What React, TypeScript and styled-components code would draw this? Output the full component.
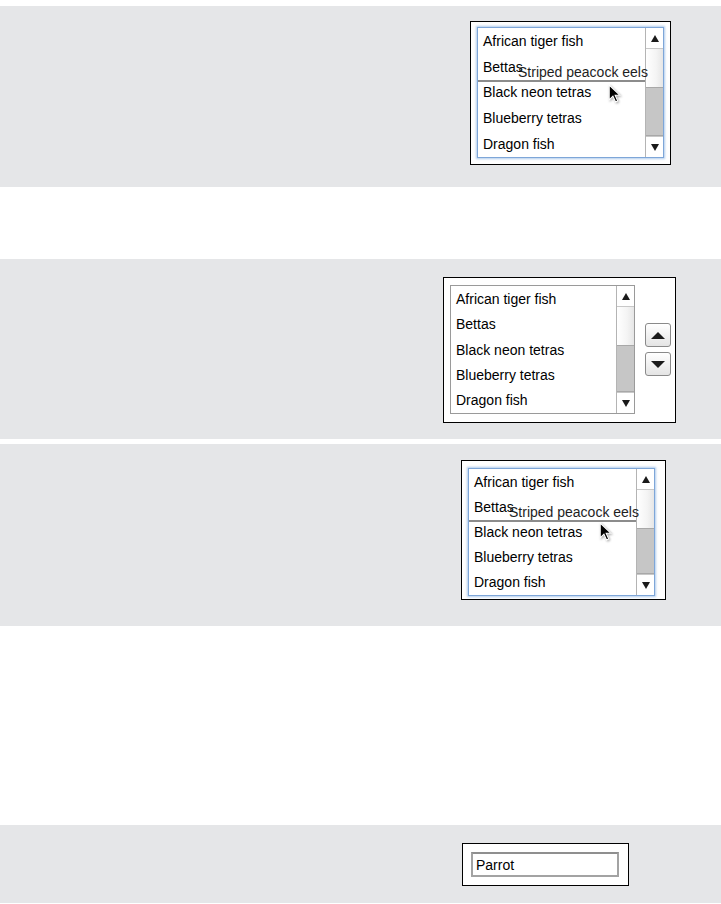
import React from 'react';
import styled, { createGlobalStyle } from 'styled-components';

const GlobalStyle = createGlobalStyle`
  body {
    margin: 0;
    background: #fff;
    font-family: "Liberation Sans", Arial, sans-serif;
  }
`;

const Page = styled.div`
  display: flex;
  flex-direction: column;
  width: 721px;
`;

const Band = styled.section<{ $height: number; $top: number; $right: number; $gapBefore: number }>`
  box-sizing: border-box;
  height: ${(p) => p.$height}px;
  margin-top: ${(p) => p.$gapBefore}px;
  padding: ${(p) => p.$top}px ${(p) => p.$right}px 0 0;
  background: #e5e6e8;
  display: flex;
  justify-content: flex-end;
  align-items: flex-start;
`;

const Frame = styled.div<{ $pad: string }>`
  border: 1px solid #000;
  background: #fff;
  padding: ${(p) => p.$pad};
  display: flex;
  align-items: center;
  gap: 10px;
`;

const ListBox = styled.div<{ $w: number; $h: number; $focused?: boolean }>`
  position: relative;
  box-sizing: border-box;
  width: ${(p) => p.$w}px;
  height: ${(p) => p.$h}px;
  display: flex;
  border: 1px solid ${(p) => (p.$focused ? '#7ea6d8' : '#9a9a9a')};
  box-shadow: ${(p) => (p.$focused ? '0 0 2px 1px rgba(110, 160, 220, 0.55)' : 'none')};
  background: #fff;
`;

const Rows = styled.div`
  flex: 1;
  display: flex;
  flex-direction: column;
`;

const Row = styled.div`
  flex: 1;
  display: flex;
  align-items: center;
  padding-left: 5px;
  font-size: 14px;
  color: #000;
`;

const ScrollBar = styled.div`
  width: 17px;
  border-left: 1px solid #b4b4b4;
  display: flex;
  flex-direction: column;
`;

const ArrowCell = styled.div<{ $h: number; $down?: boolean }>`
  height: ${(p) => p.$h}px;
  display: flex;
  align-items: center;
  justify-content: center;
  background: #fff;
  border-${(p) => (p.$down ? 'top' : 'bottom')}: 1px solid #c8c8c8;
`;

const Thumb = styled.div<{ $h: number }>`
  height: ${(p) => p.$h}px;
  background: linear-gradient(to right, #ffffff, #f4f4f4 60%, #e6e6e6);
`;

const Track = styled.div`
  flex: 1;
  background: #c6c6c6;
  border-top: 1px solid #a8a8a8;
  border-bottom: 1px solid #a8a8a8;
`;

const Triangle = styled.span<{ $down?: boolean; $size: number; $half: number }>`
  width: 0;
  height: 0;
  border-left: ${(p) => p.$half}px solid transparent;
  border-right: ${(p) => p.$half}px solid transparent;
  border-${(p) => (p.$down ? 'top' : 'bottom')}: ${(p) => p.$size}px solid #1a1a1a;
`;

const DropLine = styled.div<{ $y: number }>`
  position: absolute;
  left: 0;
  right: 18px;
  top: ${(p) => p.$y}px;
  height: 2px;
  background: #8c8c8c;
`;

const Ghost = styled.div<{ $x: number; $y: number }>`
  position: absolute;
  left: ${(p) => p.$x}px;
  top: ${(p) => p.$y}px;
  font-size: 14px;
  color: #1e1e1e;
  white-space: nowrap;
`;

const Cursor = styled.svg<{ $x: number; $y: number }>`
  position: absolute;
  left: ${(p) => p.$x}px;
  top: ${(p) => p.$y}px;
  filter: drop-shadow(1px 1px 1px rgba(0, 0, 0, 0.35));
`;

const ButtonStack = styled.div`
  display: flex;
  flex-direction: column;
  gap: 5px;
`;

const MoveButton = styled.button`
  box-sizing: border-box;
  width: 26px;
  height: 24px;
  padding: 0;
  border: 1px solid #8a8a8a;
  border-radius: 3px;
  background: linear-gradient(#ffffff, #e4e4e4);
  display: flex;
  align-items: center;
  justify-content: center;
`;

const TextField = styled.input`
  box-sizing: border-box;
  width: 148px;
  height: 25px;
  border: 2px solid #a3a3a3;
  border-top-color: #8f8f8f;
  padding: 0 3px;
  font-family: "Liberation Sans", Arial, sans-serif;
  font-size: 14px;
  color: #000;
  outline: none;
`;

const fish = ['African tiger fish', 'Bettas', 'Black neon tetras', 'Blueberry tetras', 'Dragon fish'];

interface FishListProps {
  w: number;
  h: number;
  focused?: boolean;
  dragging?: { lineY: number; textY: number; cursorX: number; cursorY: number };
}

const FishList = ({ w, h, focused, dragging }: FishListProps): JSX.Element => (
  <ListBox $w={w} $h={h} $focused={focused}>
    <Rows>
      {fish.map((name) => (
        <Row key={name}>{name}</Row>
      ))}
    </Rows>
    <ScrollBar>
      <ArrowCell $h={20}>
        <Triangle $size={7} $half={4} />
      </ArrowCell>
      <Thumb $h={38} />
      <Track />
      <ArrowCell $h={20} $down>
        <Triangle $size={7} $half={4} $down />
      </ArrowCell>
    </ScrollBar>
    {dragging && (
      <>
        <DropLine $y={dragging.lineY} />
        <Ghost $x={40} $y={dragging.textY}>Striped peacock eels</Ghost>
        <Cursor $x={dragging.cursorX} $y={dragging.cursorY} width="13" height="19" viewBox="0 0 12 18">
          <path d="M1 1 L1 15 L4.5 11.5 L7 17 L9 16 L6.6 10.6 L11 10.6 Z" fill="#000" stroke="#fff" strokeWidth="1" />
        </Cursor>
      </>
    )}
  </ListBox>
);

const App = (): JSX.Element => (
  <Page>
    <GlobalStyle />
    <Band $gapBefore={6} $height={181} $top={15} $right={50}>
      <Frame $pad="5px 6px 6px 6px">
        <FishList w={187} h={131} focused dragging={{ lineY: 52, textY: 36, cursorX: 130, cursorY: 56 }} />
      </Frame>
    </Band>
    <Band $gapBefore={72} $height={180} $top={18} $right={45}>
      <Frame $pad="7px 4px 8px 6px">
        <FishList w={185} h={129} />
        <ButtonStack>
          <MoveButton aria-label="Move up">
            <Triangle $size={7} $half={7} />
          </MoveButton>
          <MoveButton aria-label="Move down">
            <Triangle $size={7} $half={7} $down />
          </MoveButton>
        </ButtonStack>
      </Frame>
    </Band>
    <Band $gapBefore={5} $height={182} $top={16} $right={55}>
      <Frame $pad="7px 10px 3px 6px">
        <FishList w={187} h={128} focused dragging={{ lineY: 51, textY: 35, cursorX: 130, cursorY: 53 }} />
      </Frame>
    </Band>
    <Band $gapBefore={199} $height={78} $top={18} $right={92}>
      <Frame $pad="8px 9px 8px 8px">
        <TextField defaultValue="Parrot" />
      </Frame>
    </Band>
  </Page>
);

export default App;
